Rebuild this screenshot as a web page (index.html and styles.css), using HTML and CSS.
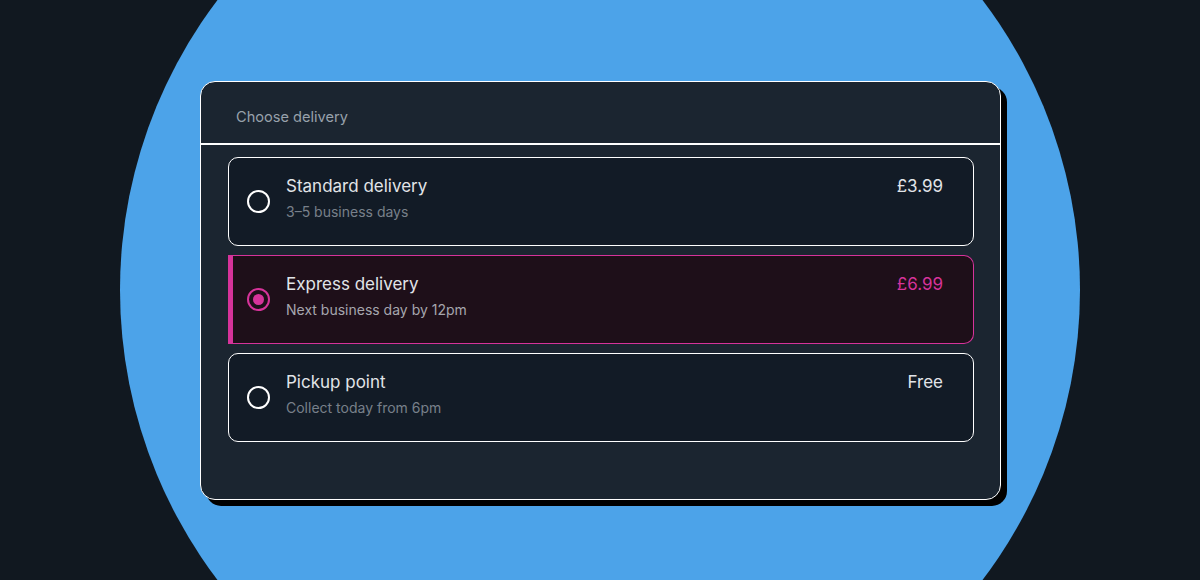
FILE: index.html
```html
<!DOCTYPE html>
<html>
<head>
<meta charset="utf-8">
<link rel="stylesheet" href="styles.css">
</head>
<body>
<div class="stage">
  <div class="blob"></div>
  <div class="card">
    <div class="card-head">Choose delivery</div>
    <div class="options">
      <div class="option">
        <span class="radio"></span>
        <div class="info">
          <div class="title">Standard delivery</div>
          <div class="sub">3–5 business days</div>
        </div>
        <div class="price">£3.99</div>
      </div>
      <div class="option selected">
        <span class="radio"></span>
        <div class="info">
          <div class="title">Express delivery</div>
          <div class="sub">Next business day by 12pm</div>
        </div>
        <div class="price">£6.99</div>
      </div>
      <div class="option">
        <span class="radio"></span>
        <div class="info">
          <div class="title">Pickup point</div>
          <div class="sub">Collect today from 6pm</div>
        </div>
        <div class="price">Free</div>
      </div>
    </div>
  </div>
</div>
</body>
</html>
```
FILE: styles.css
```css
* { box-sizing: border-box; }
html, body { margin: 0; padding: 0; }
body {
  width: 1200px;
  height: 580px;
  overflow: hidden;
  background: #111820;
  font-family: Inter, "Noto Sans", sans-serif;
}
.stage {
  position: relative;
  width: 1200px;
  height: 580px;
  overflow: hidden;
  display: flex;
  justify-content: center;
  padding-top: 81px;
}
.blob {
  position: absolute;
  left: 120px;
  top: -190px;
  width: 960px;
  height: 960px;
  border-radius: 50%;
  background: #4ca3e9;
}
.card {
  position: relative;
  width: 801px;
  height: 419px;
  margin-left: 1px;
  background: #1b2530;
  border: 1px solid #ffffff;
  border-radius: 15px;
  box-shadow: 6px 6px 0 #000000;
  display: flex;
  flex-direction: column;
}
.card-head {
  height: 63px;
  padding-left: 35px;
  display: flex;
  align-items: center;
  font-size: 14.6px;
  color: #98a1ab;
  border-bottom: 2px solid #ffffff;
  padding-top: 8px;
}
.options {
  padding: 12px 26px 0 27px;
  display: flex;
  flex-direction: column;
  gap: 9px;
}
.option {
  height: 89px;
  border: 1px solid #ffffff;
  border-radius: 10px;
  background: #121b26;
  display: flex;
  align-items: center;
  padding: 0 30px 0 18px;
}
.option.selected {
  background: #1e0f19;
  border-color: #d6339a;
  border-left: 5px solid #d6339a;
  border-radius: 0 10px 10px 0;
  padding-left: 14px;
}
.radio {
  width: 23px;
  height: 23px;
  border: 2px solid #ffffff;
  border-radius: 50%;
  flex: none;
  display: flex;
  align-items: center;
  justify-content: center;
}
.selected .radio {
  border-color: #d6339a;
}
.selected .radio::after {
  content: "";
  width: 11px;
  height: 11px;
  border-radius: 50%;
  background: #d6339a;
}
.info {
  flex: 1;
  margin-left: 16px;
  align-self: flex-start;
  padding-top: 17px;
}
.title {
  font-size: 17px;
  line-height: 22px;
  color: #e1e4e8;
}
.sub {
  font-size: 14px;
  line-height: 20px;
  margin-top: 5px;
  color: #78808a;
}
.selected .sub { color: #a6a6ae; }
.price {
  align-self: flex-start;
  padding-top: 17px;
  font-size: 17px;
  line-height: 22px;
  color: #e1e4e8;
}
.selected .price { color: #d6339a; }
```
